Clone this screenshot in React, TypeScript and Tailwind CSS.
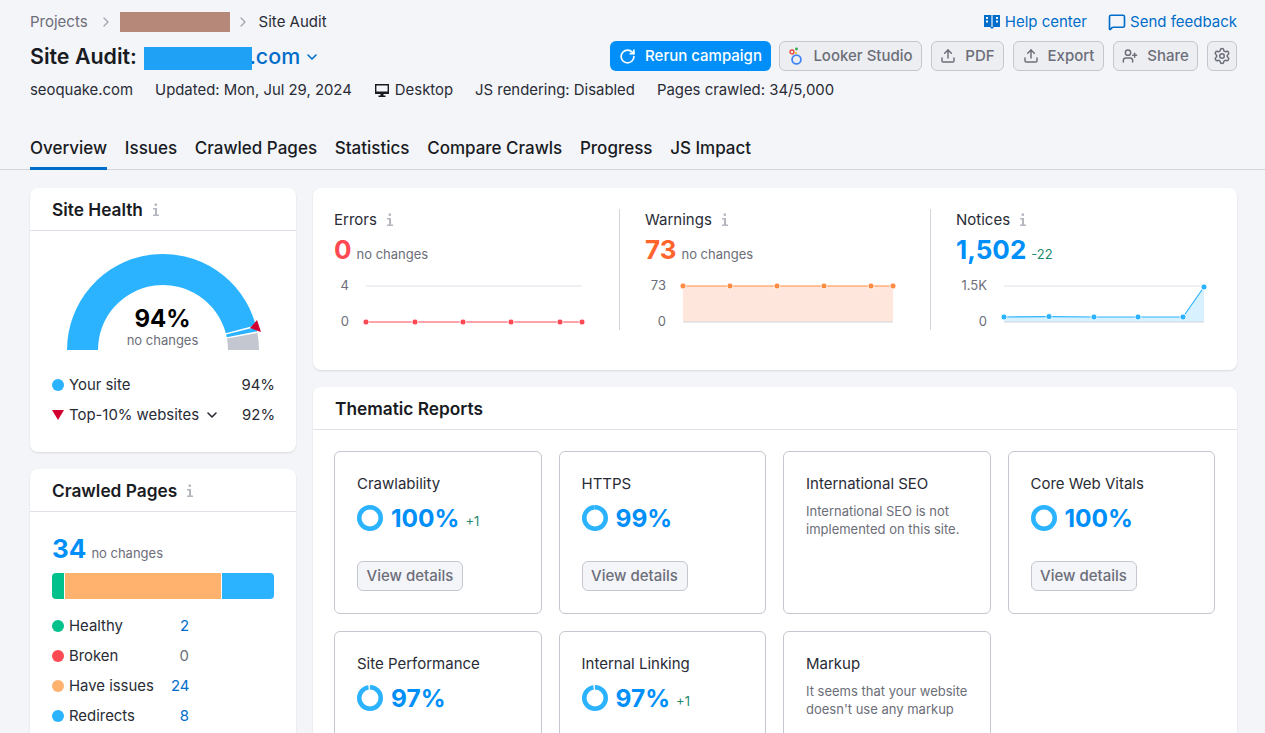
import { ChevronDown, ChevronRight, MessageSquare, RotateCw, Settings, Upload, UserPlus } from "lucide-react";

function InfoIcon() {
  return (
    <svg width="8" height="14" viewBox="0 0 8 14" className="text-[#b4b6c0]" fill="currentColor">
      <rect x="2.6" y="0.5" width="2.4" height="2.4" />
      <path d="M1 5h4v6.4h2V13H1v-1.6h2V6.6H1z" />
    </svg>
  );
}

function BookIcon() {
  return (
    <svg width="18" height="18" viewBox="0 0 18 18" className="text-[#006dca]">
      <path fill="currentColor" d="M1 2h7l1 1 1-1h7v12h-6l-2 2-2-2H1z" />
      <path fill="#f4f5f9" d="M3 4h2v2H3zM3 7.5h2v2H3zM13 4h2v2h-2zM13 7.5h2v2h-2z" />
      <path stroke="#f4f5f9" strokeWidth="1.2" d="M9 3v11" />
    </svg>
  );
}

function MonitorIcon() {
  return (
    <svg width="16" height="16" viewBox="0 0 16 16" className="text-[#191b23]">
      <path fill="currentColor" fillRule="evenodd" d="M1 2h14v10H1zM2.4 3.4v6.2h11.2V3.4z" />
      <path fill="currentColor" d="M6.5 12h3v1.4h2V15h-7v-1.6h2z" />
    </svg>
  );
}

function LookerIcon() {
  return (
    <svg width="16" height="22" viewBox="0 0 16 22" fill="none">
      <circle cx="8.5" cy="14.5" r="4.4" stroke="#4285f4" strokeWidth="1.8" />
      <circle cx="4" cy="7" r="2" stroke="#ea4335" strokeWidth="1.3" />
      <circle cx="8.5" cy="4" r="1.4" fill="#34a853" />
      <circle cx="8" cy="8" r="1" fill="#fbbc04" />
    </svg>
  );
}

function GrayButton({ icon, label, className }: { icon: React.ReactNode; label?: string; className: string }) {
  return (
    <button className={`flex h-[30px] items-center justify-center gap-[9px] rounded-md border border-[#c4c7cf] bg-[#eceef2] text-[15px] font-medium text-[#6c6e79] ${className}`}>
      {icon}
      {label}
    </button>
  );
}

function Card({ title, className, children }: { title: string; className?: string; children: React.ReactNode }) {
  return (
    <section className={`rounded-lg bg-white shadow-[0_1px_2px_rgba(25,27,35,0.12)] ${className ?? ""}`}>
      <header className="flex h-[43px] items-center gap-[9px] border-b border-[#e0e1e9] pl-[22px] pt-px text-[17.3px] font-semibold text-[#191b23]">
        {title}
        {title !== "Thematic Reports" && <InfoIcon />}
      </header>
      {children}
    </section>
  );
}

function Gauge() {
  const polar = (r: number, deg: number) => {
    const a = (deg * Math.PI) / 180;
    return `${100 + r * Math.cos(a)} ${100 - r * Math.sin(a)}`;
  };
  const band = (from: number, to: number) =>
    `M${polar(96, from)} A96 96 0 0 1 ${polar(96, to)} L${polar(65, to)} A65 65 0 0 0 ${polar(65, from)} Z`;
  return (
    <svg width="200" height="100" viewBox="0 0 200 100" className="overflow-visible">
      <path fill="#2bb3ff" d={band(180, 14.9)} />
      <path fill="#2bb3ff" d={band(13.9, 11.2)} />
      <path fill="#c4c7cf" d={band(10.2, 0)} />
      <path fill="#d1002f" d="M187 78 L198 82 L194 70 Z" />
    </svg>
  );
}

function Legend({ color, label, value, valueClass }: { color: string; label: string; value: string; valueClass: string }) {
  return (
    <div className="flex h-[30px] items-center text-[14.9px] text-[#292c36]">
      <span className={`mr-[5px] h-3 w-3 rounded-full ${color}`} />
      <span className="w-[102px]">{label}</span>
      <span className={`w-[18px] whitespace-nowrap text-right ${valueClass}`}>{value}</span>
    </div>
  );
}

function SiteHealth() {
  return (
    <Card title="Site Health" className="h-[264px]">
      <div className="flex justify-center pt-[19px] pr-px">
        <div className="relative">
          <Gauge />
          <div className="absolute inset-x-0 top-[55px] flex flex-col items-center">
            <span className="text-[24px] font-bold leading-[28px] text-black">94%</span>
            <span className="text-[13px] leading-[14px] text-[#6c6e79]">no changes</span>
          </div>
        </div>
      </div>
      <div className="mt-[20px] pl-[22px] pr-[21px] text-[14.9px] text-[#292c36]">
        <div className="flex h-[30px] items-center">
          <span className="mr-[5px] h-3 w-3 rounded-full bg-[#2bb3ff]" />
          Your site
          <span className="ml-auto">94%</span>
        </div>
        <div className="flex h-[30px] items-center">
          <svg width="12" height="10" viewBox="0 0 12 10" className="mr-[5px]">
            <path fill="#d1002f" d="M0 0h12L6 10z" />
          </svg>
          Top-10% websites
          <ChevronDown size={16} strokeWidth={2.4} className="ml-[5px]" />
          <span className="ml-auto">92%</span>
        </div>
      </div>
    </Card>
  );
}

function CrawledPages() {
  return (
    <Card title="Crawled Pages" className="h-[320px]">
      <div className="px-[22px] pt-[20px]">
        <div className="flex items-baseline gap-[5px]">
          <span className="text-[26px] font-bold leading-[34px] text-[#008ff8]">34</span>
          <span className="text-[13px] text-[#6c6e79]">no changes</span>
        </div>
        <div className="mt-[7px] flex h-[26px] gap-px overflow-hidden rounded-sm">
          <span className="w-3 bg-[#00c08b]" />
          <span className="w-[156px] bg-[#ffb26e]" />
          <span className="flex-1 bg-[#2bb3ff]" />
        </div>
        <div className="mt-3">
          <Legend color="bg-[#00c08b]" label="Healthy" value="2" valueClass="text-[#006dca]" />
          <Legend color="bg-[#ff4953]" label="Broken" value="0" valueClass="text-[#6c6e79]" />
          <Legend color="bg-[#ffb26e]" label="Have issues" value="24" valueClass="text-[#006dca]" />
          <Legend color="bg-[#2bb3ff]" label="Redirects" value="8" valueClass="text-[#006dca]" />
        </div>
      </div>
    </Card>
  );
}

type ChartProps = {
  color: string;
  top: string;
  xs: number[];
  ys: number[];
  fill?: string;
  left: number;
  showTop: boolean;
};

// x values are relative to the section's left edge, y to the chart top
function Chart({ color, top, xs, ys, fill, left, showTop }: ChartProps) {
  const points = xs.map((x, i) => `${x},${ys[i]}`).join(" ");
  const first = xs[0];
  const last = xs[xs.length - 1];
  return (
    <svg width="270" height="60" viewBox="0 0 270 60" className="mt-[11px] overflow-visible">
      <text x={left} y="14" textAnchor="end" fontSize="13" fill="#6c6e79">{top}</text>
      <text x={left} y="50" textAnchor="end" fontSize="13" fill="#6c6e79">0</text>
      {showTop && <line x1={first} x2={last} y1="10" y2="10" stroke="#e0e1e9" />}
      {fill && <polygon points={`${first},46 ${points} ${last},46`} fill={fill} />}
      {fill && <line x1={first} x2={last} y1="46" y2="46" stroke="#d1d4db" />}
      <polyline points={points} fill="none" stroke={color} strokeWidth="1.2" />
      {xs.map((x, i) => (
        <circle key={x} cx={x} cy={ys[i]} r="3" fill={color} stroke="#fff" strokeWidth="0.8" />
      ))}
    </svg>
  );
}

function Metric({ label, value, valueClass, delta, deltaClass, chart, className }: {
  label: string;
  value: string;
  valueClass: string;
  delta: string;
  deltaClass: string;
  chart: React.ReactNode;
  className: string;
}) {
  return (
    <div className={`h-[121px] ${className}`}>
      <div className="mt-px flex h-5 items-center gap-[9px] text-[15px] text-[#292c36]">
        {label}
        <InfoIcon />
      </div>
      <div className="mt-[5px] flex h-[30px] items-center gap-[5px]">
        <span className={`text-[26px] font-bold leading-[30px] ${valueClass}`}>{value}</span>
        <span className={`pt-[9px] text-[13px] ${deltaClass}`}>{delta}</span>
      </div>
      {chart}
    </div>
  );
}

function Ring({ percent }: { percent: number }) {
  const c = 2 * Math.PI * 10.75;
  return (
    <svg width="26" height="26" viewBox="0 0 26 26" className="-rotate-90">
      <circle cx="13" cy="13" r="10.75" fill="none" stroke="#eaf7ff" strokeWidth="4.5" />
      <circle
        cx="13"
        cy="13"
        r="10.75"
        fill="none"
        stroke="#2bb3ff"
        strokeWidth="4.5"
        strokeDasharray={`${(c * percent) / 100} ${c}`}
      />
    </svg>
  );
}

function ReportCard({ title, percent, delta, note, details }: { title: string; percent?: number; delta?: string; note?: string; details?: boolean }) {
  return (
    <div className="h-[163px] rounded-md border border-[#c4c7cf] bg-white px-[22px] pt-[22px]">
      <div className="text-[15px] leading-5 text-[#292c36]">{title}</div>
      {note ? (
        <p className="mt-[8px] text-[13px] leading-[18px] text-[#6c6e79]">{note}</p>
      ) : (
        <>
          <div className="mt-[11px] flex h-[26px] items-center">
            <Ring percent={percent ?? 100} />
            <span className="ml-[8px] text-[24.5px] font-bold leading-[30px] text-[#008ff8]">{percent}%</span>
            {delta && <span className="ml-[6px] pt-[7px] text-[13px] text-[#1f8a6d]">{delta}</span>}
          </div>
          {details && (
            <button className="mt-[30px] flex h-[30px] w-[106px] items-center justify-center rounded-md border border-[#c4c7cf] bg-[#f4f5f9] text-[15px] font-medium text-[#6c6e79]">
              View details
            </button>
          )}
        </>
      )}
    </div>
  );
}

const tabs = ["Overview", "Issues", "Crawled Pages", "Statistics", "Compare Crawls", "Progress", "JS Impact"];

export default function App() {
  return (
    <div className="h-screen overflow-hidden bg-[#f4f5f9] [font-family:Inter,sans-serif] text-[#191b23]">
      <div className="pl-[30px] pr-[28px] pt-[12px]">
        <div className="flex h-5 items-center text-[15px]">
          <span className="text-[#6c6e79]">Projects</span>
          <ChevronRight size={16} className="ml-[10px] text-[#a4a6b3]" />
          <span className="ml-[6px] h-5 w-[110px] bg-[#b5887a]" />
          <ChevronRight size={16} className="ml-[5px] text-[#a4a6b3]" />
          <span className="ml-[8px] text-[#292c36]">Site Audit</span>
          <a className="ml-auto flex items-center gap-[4px] text-[#006dca]">
            <BookIcon />
            Help center
          </a>
          <a className="ml-[21px] flex items-center gap-[4px] text-[#006dca]">
            <MessageSquare size={18} strokeWidth={2.2} />
            Send feedback
          </a>
        </div>

        <div className="mt-[9px] flex h-[30px] items-center">
          <h1 className="text-[21.4px] font-semibold">Site Audit:</h1>
          <span className="relative z-10 ml-[7px] mt-[4px] h-[23px] w-[108px] bg-[#1fa2f5]" />
          <span className="-ml-[2.5px] text-[21.4px] font-medium text-[#006dca]">.com</span>
          <ChevronDown size={16} strokeWidth={2.4} className="ml-[4px] mt-[2px] text-[#006dca]" />
          <button className="ml-auto flex h-[30px] w-[161px] items-center justify-center gap-[9px] rounded-md bg-[#008ff8] text-[15px] font-medium text-white">
            <RotateCw size={17} strokeWidth={2.4} />
            Rerun campaign
          </button>
          <GrayButton icon={<LookerIcon />} label="Looker Studio" className="ml-[8px] w-[143px]" />
          <GrayButton icon={<Upload size={16} strokeWidth={2.2} />} label="PDF" className="ml-[9px] w-[73px]" />
          <GrayButton icon={<Upload size={16} strokeWidth={2.2} />} label="Export" className="ml-[9px] w-[91px]" />
          <GrayButton icon={<UserPlus size={16} strokeWidth={2.2} />} label="Share" className="ml-[9px] w-[85px]" />
          <GrayButton icon={<Settings size={18} />} className="ml-[9px] w-[30px]" />
        </div>

        <div className="mt-[9px] flex h-5 items-center gap-[22px] text-[14.9px] text-[#292c36]">
          <span>seoquake.com</span>
          <span>Updated: Mon, Jul 29, 2024</span>
          <span className="flex items-center gap-[5px]">
            <MonitorIcon />
            Desktop
          </span>
          <span>JS rendering: Disabled</span>
          <span>Pages crawled: 34/5,000</span>
        </div>
      </div>

      <nav className="mt-[29px] flex h-[41px] gap-[17.7px] border-b border-[#d1d4db] px-[30px]">
        {tabs.map((tab, i) => (
          <span
            key={tab}
            className={`h-[41px] border-b-[3px] pt-[7px] text-[17px] font-medium ${i === 0 ? "border-[#006dca]" : "border-transparent"}`}
          >
            {tab}
          </span>
        ))}
      </nav>

      <div className="mt-[18px] grid grid-cols-[266px_924px] gap-[17px] px-[30px]">
        <div className="flex flex-col gap-[17px]">
          <SiteHealth />
          <CrawledPages />
        </div>
        <div className="flex flex-col gap-[17px]">
          <section className="flex h-[182px] rounded-lg bg-white pl-[21px] pt-[21px] shadow-[0_1px_2px_rgba(25,27,35,0.12)]">
            <Metric
              label="Errors"
              value="0"
              valueClass="text-[#ff4953]"
              delta="no changes"
              deltaClass="text-[#6c6e79]"
              className="w-[286px] border-r border-[#d1d4db]"
              chart={<Chart color="#ff4953" top="4" left={15} showTop xs={[32, 81, 129, 177, 226, 248]} ys={[46, 46, 46, 46, 46, 46]} />}
            />
            <Metric
              label="Warnings"
              value="73"
              valueClass="text-[#ff642d]"
              delta="no changes"
              deltaClass="text-[#6c6e79]"
              className="ml-[25px] w-[286px] border-r border-[#d1d4db]"
              chart={<Chart color="#ff8c43" fill="#ffe6dc" top="73" left={21} showTop={false} xs={[38, 85, 132, 179, 226, 248]} ys={[10, 10, 10, 10, 10, 10]} />}
            />
            <Metric
              label="Notices"
              value="1,502"
              valueClass="text-[#008ff8]"
              delta="-22"
              deltaClass="text-[#1f8a6d]"
              className="ml-[25px] w-[270px]"
              chart={<Chart color="#2bb3ff" fill="#d8f1ff" top="1.5K" left={31} showTop xs={[48, 93, 138, 182, 227, 248]} ys={[41, 40.6, 41, 41, 41, 11]} />}
            />
          </section>

          <Card title="Thematic Reports">
            <div className="grid grid-cols-4 gap-[17px] pl-[21px] pr-[22px] pt-[21px]">
              <ReportCard title="Crawlability" percent={100} delta="+1" details />
              <ReportCard title="HTTPS" percent={99} details />
              <ReportCard title="International SEO" note="International SEO is not implemented on this site." />
              <ReportCard title="Core Web Vitals" percent={100} details />
              <ReportCard title="Site Performance" percent={97} />
              <ReportCard title="Internal Linking" percent={97} delta="+1" />
              <ReportCard title="Markup" note="It seems that your website doesn't use any markup" />
            </div>
          </Card>
        </div>
      </div>
    </div>
  );
}
